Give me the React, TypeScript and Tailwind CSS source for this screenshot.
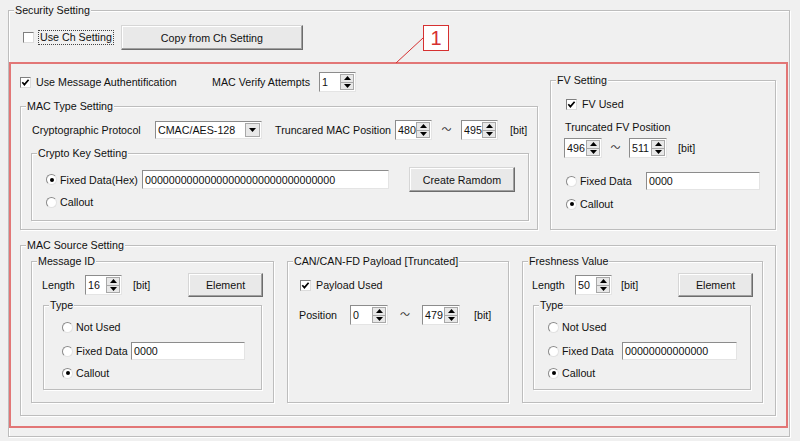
import React from 'react';

type Kids = { children?: React.ReactNode };

const Group = ({ title, className, children }: Kids & { title: string; className: string }) => (
  <div className={`relative border border-[#bdbdbd] shadow-[inset_1px_1px_0_#fff,1px_1px_0_#fff] shrink-0 ${className}`}>
    <span className="absolute left-[5px] top-[-8px] px-[1px] bg-[#f0f0f0] leading-[14px] whitespace-nowrap">{title}</span>
    {children}
  </div>
);

const Check = ({ checked }: { checked?: boolean }) => (
  <span className="w-[11px] h-[11px] shrink-0 bg-white border border-[#7f7f7f] border-r-[#dcdcdc] border-b-[#dcdcdc] flex items-center justify-center">
    {checked && (
      <svg width="9" height="9" viewBox="0 0 9 9">
        <path d="M1.3 4.3 L3.4 6.6 L7.6 1.8" fill="none" stroke="#000" strokeWidth="1.7" />
      </svg>
    )}
  </span>
);

const Radio = ({ checked }: { checked?: boolean }) => (
  <span className="w-[11px] h-[11px] shrink-0 rounded-full bg-white border border-[#8a8a8a] border-r-[#e2e2e2] border-b-[#e2e2e2] flex items-center justify-center">
    {checked && <span className="w-[4px] h-[4px] rounded-full bg-black" />}
  </span>
);

const Up = () => (
  <svg width="7" height="4" viewBox="0 0 7 4">
    <path d="M0 4 L3.5 0 L7 4 Z" fill="#000" />
  </svg>
);

const Down = () => (
  <svg width="7" height="4" viewBox="0 0 7 4">
    <path d="M0 0 L7 0 L3.5 4 Z" fill="#000" />
  </svg>
);

const Spin = ({ value, w }: { value: string; w: string }) => (
  <div className={`${w} h-[20px] shrink-0 flex bg-white border border-[#8c8c8c] border-r-[#e4e4e4] border-b-[#e4e4e4]`}>
    <span className="flex-1 pl-[2px] flex items-center">{value}</span>
    <span className="w-[14px] my-[1px] mr-[1px] flex flex-col border border-[#a8a8a8] bg-[#e8e8e8]">
      <span className="flex-1 flex items-center justify-center border-b border-[#a8a8a8]">
        <Up />
      </span>
      <span className="flex-1 flex items-center justify-center">
        <Down />
      </span>
    </span>
  </div>
);

const Field = ({ value, w, h }: { value: string; w: string; h: string }) => (
  <div className={`${w} ${h} shrink-0 flex items-center pl-[2px] bg-white border border-[#8c8c8c] border-r-[#e4e4e4] border-b-[#e4e4e4] overflow-hidden whitespace-nowrap`}>
    {value}
  </div>
);

const Button = ({ label, w, h }: { label: string; w: string; h: string }) => (
  <div className={`${w} ${h} shrink-0 flex items-center justify-center bg-[#e9e9e9] border border-[#d6d6d6] border-r-[#6c6c6c] border-b-[#6c6c6c] shadow-[inset_-1px_-1px_0_#a0a0a0,inset_1px_1px_0_#fff]`}>
    {label}
  </div>
);

const Wave = ({ w }: { w: string }) => (
  <span className={`${w} shrink-0 text-center text-[10px] text-[#333]`}>～</span>
);

export default function App() {
  return (
    <div className="relative w-[800px] h-[441px] bg-[#f0f0f0] overflow-hidden text-[10.7px] leading-[14px] text-[#111] font-['Liberation_Sans','Noto_Sans_CJK_JP',Arial,sans-serif]">
      <div className="pt-[10px] pl-[8px]">
        <Group title="Security Setting" className="w-[782px] h-[427px]">
          {/* top row */}
          <div className="flex items-center h-[25px] mt-[14px] pl-[14px]">
            <Check />
            <span className="ml-[4px] px-[1px] border border-dotted border-[#444] leading-[13px]">Use Ch Setting</span>
            <span className="ml-[7px]">
              <Button label="Copy from Ch Setting" w="w-[182px]" h="h-[25px]" />
            </span>
          </div>

          {/* highlighted area */}
          <div className="mt-[12px] w-[779px] h-[366px] border-2 border-[#e27676]">
            <div className="flex">
              <div className="w-[529px] shrink-0">
                <div className="flex items-center h-[20px] mt-[8px] pl-[9px]">
                  <Check checked />
                  <span className="ml-[5px] w-[176px]">Use Message Authentification</span>
                  <span className="w-[107px]">MAC Verify Attempts</span>
                  <Spin value="1" w="w-[37px]" />
                </div>

                <Group title="MAC Type Setting" className="mt-[14px] ml-[9px] w-[518px] h-[124px]">
                  <div className="flex items-center h-[20px] mt-[13px] pl-[11px]">
                    <span className="w-[123px]">Cryptographic Protocol</span>
                    <div className="w-[107px] h-[18px] shrink-0 flex bg-white border border-[#8c8c8c] border-r-[#e4e4e4] border-b-[#e4e4e4]">
                      <span className="flex-1 pl-[2px] flex items-center">CMAC/AES-128</span>
                      <span className="w-[15px] my-[1px] mr-[1px] flex items-center justify-center border border-[#a8a8a8] bg-[#e8e8e8]">
                        <Down />
                      </span>
                    </div>
                    <span className="ml-[13px] w-[120px]">Truncared MAC Position</span>
                    <Spin value="480" w="w-[37px]" />
                    <Wave w="w-[29px]" />
                    <Spin value="495" w="w-[37px]" />
                    <span className="ml-[12px]">[bit]</span>
                  </div>

                  <Group title="Crypto Key Setting" className="mt-[13px] ml-[10px] w-[498px] h-[68px]">
                    <div className="flex items-center h-[25px] mt-[13px] pl-[14px]">
                      <Radio checked />
                      <span className="ml-[3px] w-[82px]">Fixed Data(Hex)</span>
                      <Field value="00000000000000000000000000000000" w="w-[247px]" h="h-[19px]" />
                      <span className="ml-[20px]">
                        <Button label="Create Ramdom" w="w-[106px]" h="h-[25px]" />
                      </span>
                    </div>
                    <div className="flex items-center h-[14px] mt-[3px] pl-[14px]">
                      <Radio />
                      <span className="ml-[3px]">Callout</span>
                    </div>
                  </Group>
                </Group>
              </div>

              <Group title="FV Setting" className="ml-[10px] mt-[16px] w-[226px] h-[150px]">
                <div className="flex items-center h-[14px] mt-[16px] pl-[15px]">
                  <Check checked />
                  <span className="ml-[5px]">FV Used</span>
                </div>
                <div className="flex items-center h-[14px] mt-[9px] pl-[14px]">Truncated FV Position</div>
                <div className="flex items-center h-[20px] mt-[4px] pl-[13px]">
                  <Spin value="496" w="w-[38px]" />
                  <Wave w="w-[27px]" />
                  <Spin value="511" w="w-[38px]" />
                  <span className="ml-[11px]">[bit]</span>
                </div>
                <div className="flex items-center h-[18px] mt-[14px] pl-[15px]">
                  <Radio />
                  <span className="ml-[3px] w-[66px]">Fixed Data</span>
                  <Field value="0000" w="w-[114px]" h="h-[18px]" />
                </div>
                <div className="flex items-center h-[14px] mt-[7px] pl-[15px]">
                  <Radio checked />
                  <span className="ml-[3px]">Callout</span>
                </div>
              </Group>
            </div>

            <Group title="MAC Source Setting" className="mt-[15px] ml-[9px] w-[756px] h-[171px]">
              <div className="flex mt-[15px]">
                {/* Message ID */}
                <Group title="Message ID" className="ml-[10px] w-[243px] h-[142px]">
                  <div className="flex items-center h-[24px] mt-[11px] pl-[10px]">
                    <span className="w-[43px]">Length</span>
                    <Spin value="16" w="w-[37px]" />
                    <span className="ml-[11px] w-[55px]">[bit]</span>
                    <Button label="Element" w="w-[75px]" h="h-[24px]" />
                  </div>
                  <Group title="Type" className="mt-[8px] ml-[11px] w-[219px] h-[85px]">
                    <div className="flex items-center h-[18px] mt-[12px] pl-[18px]">
                      <Radio />
                      <span className="ml-[3px]">Not Used</span>
                    </div>
                    <div className="flex items-center h-[18px] mt-[6px] pl-[18px]">
                      <Radio />
                      <span className="ml-[3px] w-[55px]">Fixed Data</span>
                      <Field value="0000" w="w-[114px]" h="h-[18px]" />
                    </div>
                    <div className="flex items-center h-[18px] mt-[4px] pl-[18px]">
                      <Radio checked />
                      <span className="ml-[3px]">Callout</span>
                    </div>
                  </Group>
                </Group>

                {/* Payload */}
                <Group title="CAN/CAN-FD Payload [Truncated]" className="ml-[13px] w-[222px] h-[142px]">
                  <div className="flex items-center h-[14px] mt-[16px] pl-[12px]">
                    <Check checked />
                    <span className="ml-[5px]">Payload Used</span>
                  </div>
                  <div className="flex items-center h-[20px] mt-[13px] pl-[11px]">
                    <span className="w-[51px]">Position</span>
                    <Spin value="0" w="w-[38px]" />
                    <Wave w="w-[34px]" />
                    <Spin value="479" w="w-[38px]" />
                    <span className="ml-[14px]">[bit]</span>
                  </div>
                </Group>

                {/* Freshness */}
                <Group title="Freshness Value" className="ml-[13px] w-[241px] h-[142px]">
                  <div className="flex items-center h-[24px] mt-[11px] pl-[9px]">
                    <span className="w-[43px]">Length</span>
                    <Spin value="50" w="w-[37px]" />
                    <span className="ml-[9px] w-[57px]">[bit]</span>
                    <Button label="Element" w="w-[75px]" h="h-[24px]" />
                  </div>
                  <Group title="Type" className="mt-[8px] ml-[10px] w-[218px] h-[85px]">
                    <div className="flex items-center h-[18px] mt-[12px] pl-[14px]">
                      <Radio />
                      <span className="ml-[3px]">Not Used</span>
                    </div>
                    <div className="flex items-center h-[18px] mt-[6px] pl-[14px]">
                      <Radio />
                      <span className="ml-[3px] w-[60px]">Fixed Data</span>
                      <Field value="00000000000000" w="w-[115px]" h="h-[18px]" />
                    </div>
                    <div className="flex items-center h-[18px] mt-[4px] pl-[14px]">
                      <Radio checked />
                      <span className="ml-[3px]">Callout</span>
                    </div>
                  </Group>
                </Group>
              </div>
            </Group>
          </div>
        </Group>
      </div>

      {/* callout marker */}
      <svg className="absolute left-[394px] top-[36px]" width="32" height="29" viewBox="0 0 32 29">
        <line x1="29" y1="2" x2="2" y2="27" stroke="#d63030" strokeWidth="1" />
      </svg>
      <div className="absolute left-[423px] top-[25px] w-[26px] h-[26px] bg-white border border-[#d63030] flex items-center justify-center text-[20px] leading-none text-[#d63030] font-['Liberation_Sans',sans-serif]">
        1
      </div>
    </div>
  );
}
